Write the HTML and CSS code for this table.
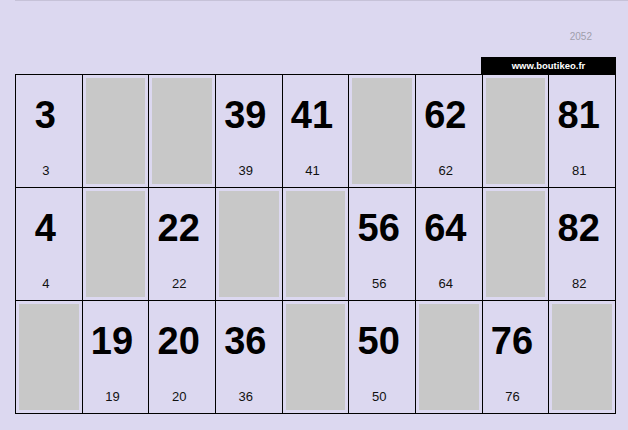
FILE: index.html
```html
<!DOCTYPE html>
<html lang="fr">
<head>
<meta charset="utf-8">
<title>Carton de loto 2052</title>
<link rel="stylesheet" href="styles.css">
</head>
<body>
<div class="page">
  <div class="topline"></div>
  <div class="meta"><span class="code">2052</span></div>
  <div class="brand-row"><div class="brand">www.boutikeo.fr</div></div>
  <div class="grid">
    <div class="cell num"><span class="big">3</span><span class="small">3</span></div>
    <div class="cell blank"><div class="fill"></div></div>
    <div class="cell blank"><div class="fill"></div></div>
    <div class="cell num"><span class="big">39</span><span class="small">39</span></div>
    <div class="cell num"><span class="big">41</span><span class="small">41</span></div>
    <div class="cell blank"><div class="fill"></div></div>
    <div class="cell num"><span class="big">62</span><span class="small">62</span></div>
    <div class="cell blank"><div class="fill"></div></div>
    <div class="cell num"><span class="big">81</span><span class="small">81</span></div>

    <div class="cell num"><span class="big">4</span><span class="small">4</span></div>
    <div class="cell blank"><div class="fill"></div></div>
    <div class="cell num"><span class="big">22</span><span class="small">22</span></div>
    <div class="cell blank"><div class="fill"></div></div>
    <div class="cell blank"><div class="fill"></div></div>
    <div class="cell num"><span class="big">56</span><span class="small">56</span></div>
    <div class="cell num"><span class="big">64</span><span class="small">64</span></div>
    <div class="cell blank"><div class="fill"></div></div>
    <div class="cell num"><span class="big">82</span><span class="small">82</span></div>

    <div class="cell blank"><div class="fill"></div></div>
    <div class="cell num"><span class="big">19</span><span class="small">19</span></div>
    <div class="cell num"><span class="big">20</span><span class="small">20</span></div>
    <div class="cell num"><span class="big">36</span><span class="small">36</span></div>
    <div class="cell blank"><div class="fill"></div></div>
    <div class="cell num"><span class="big">50</span><span class="small">50</span></div>
    <div class="cell blank"><div class="fill"></div></div>
    <div class="cell num"><span class="big">76</span><span class="small">76</span></div>
    <div class="cell blank"><div class="fill"></div></div>
  </div>
</div>
</body>
</html>
```
FILE: styles.css
```css
html, body {
  margin: 0;
  padding: 0;
  background: #dcd8f0;
}
body {
  font-family: "Liberation Sans", Arial, sans-serif;
  color: #000;
}
.page {
  width: 628px;
  height: 430px;
  padding-left: 15px;
  box-sizing: border-box;
}
.topline {
  height: 1px;
  background: #c6c2d8;
}
.meta {
  width: 601px;
  margin-top: 30px;
  display: flex;
  justify-content: flex-end;
  padding-right: 24px;
  box-sizing: border-box;
}
.code {
  font-size: 10px;
  line-height: 12px;
  color: #a09eac;
}
.brand-row {
  width: 601px;
  margin-top: 14px;
  display: flex;
  justify-content: flex-end;
}
.brand {
  width: 135px;
  height: 17px;
  background: #000;
  color: #fff;
  font-weight: bold;
  font-size: 9.5px;
  line-height: 17px;
  text-align: center;
}
.grid {
  width: 601px;
  box-sizing: border-box;
  display: grid;
  grid-template-columns: repeat(9, 1fr);
  grid-auto-rows: 112px;
  gap: 1px;
  background: #000;
  border: 1px solid #000;
}
.cell {
  background: #dcd8f0;
  box-sizing: border-box;
}
.blank {
  padding: 3px;
}
.fill {
  width: 100%;
  height: 100%;
  background: #c8c8c8;
}
.num {
  display: flex;
  flex-direction: column;
  align-items: center;
  padding: 18px 6px 0 0;
}
.big {
  font-size: 38px;
  font-weight: bold;
  line-height: 44px;
  margin-right: 1px;
}
.small {
  font-size: 13px;
  line-height: 15px;
  margin-top: 26px;
  color: #111;
}
```
